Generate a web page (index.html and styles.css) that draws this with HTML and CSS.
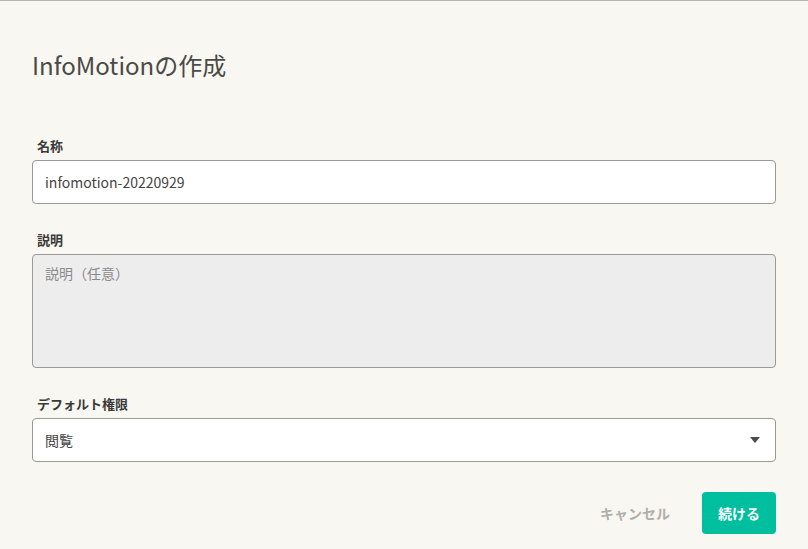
FILE: index.html
```html
<!DOCTYPE html>
<html lang="ja">
<head>
<meta charset="utf-8">
<title>InfoMotionの作成</title>
<link rel="stylesheet" href="styles.css">
</head>
<body>
<div class="dialog">
  <h1 class="title">InfoMotionの作成</h1>
  <div class="field">
    <label class="label" for="name">名称</label>
    <input class="input" id="name" type="text" value="infomotion-20220929">
  </div>
  <div class="field">
    <label class="label" for="desc">説明</label>
    <textarea class="textarea" id="desc" placeholder="説明（任意）"></textarea>
  </div>
  <div class="field">
    <div class="label">デフォルト権限</div>
    <div class="select">
      <span class="select-value">閲覧</span>
      <svg class="caret" width="10" height="6" viewBox="0 0 10 6"><path d="M0 0H10L5 6Z" fill="#4d4d4d"/></svg>
    </div>
  </div>
  <div class="actions">
    <button class="btn-cancel" type="button">キャンセル</button>
    <button class="btn-primary" type="button">続ける</button>
  </div>
</div>
</body>
</html>
```
FILE: styles.css
```css
* { box-sizing: border-box; }
html, body { height: 100%; }
body {
  margin: 0;
  background: #f8f7f1;
  border-top: 1px solid #b5b3ad;
  font-family: "Noto Sans CJK JP", "Noto Sans", sans-serif;
  color: #333;
}
.dialog {
  padding: 47px 32px 0 32px;
  display: flex;
  flex-direction: column;
}
.title {
  margin: 0 0 55px 0;
  font-size: 24px;
  line-height: 34px;
  font-weight: 400;
  color: #4a4a47;
}
.field {
  display: flex;
  flex-direction: column;
  margin-bottom: 27px;
}
.label {
  font-size: 13px;
  line-height: 18px;
  font-weight: 700;
  color: #3a3a3a;
  padding-left: 5px;
  margin-bottom: 5px;
}
.input, .textarea, .select {
  width: 100%;
  border: 1px solid #9b9a97;
  border-radius: 4px;
  font-family: inherit;
  font-size: 14px;
  color: #444;
  outline: none;
}
.input {
  height: 44px;
  padding: 0 12px;
  background: #fff;
}
.textarea {
  height: 114px;
  padding: 8px 12px;
  line-height: 20px;
  background: #ededed;
  resize: none;
  display: block;
}
.textarea::placeholder { color: #8a8a8a; }
.select {
  height: 44px;
  padding: 0 15px 0 12px;
  background: #fff;
  display: flex;
  align-items: center;
  justify-content: space-between;
}
.caret { display: block; }
.actions {
  display: flex;
  justify-content: flex-end;
  align-items: center;
  gap: 32px;
  margin-top: 3px;
}
.btn-cancel {
  background: none;
  border: none;
  padding: 0;
  font-family: inherit;
  font-size: 14px;
  font-weight: 700;
  color: #b0afab;
}
.btn-primary {
  width: 74px;
  height: 42px;
  background: #00bf9f;
  border: none;
  border-radius: 4px;
  color: #fff;
  font-family: inherit;
  font-size: 14px;
  font-weight: 700;
}
```
